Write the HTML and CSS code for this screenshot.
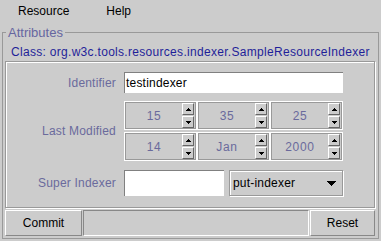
FILE: index.html
```html
<!DOCTYPE html>
<html>
<head>
<meta charset="utf-8">
<link rel="stylesheet" href="styles.css">
</head>
<body>
<div class="menubar">
  <span class="menu-item">Resource</span>
  <span class="menu-item">Help</span>
</div>
<fieldset class="attributes">
  <legend class="attributes-title">Attributes</legend>
  <div class="class-name">Class: org.w3c.tools.resources.indexer.SampleResourceIndexer</div>
  <div class="panel">
    <div class="row row-identifier">
      <span class="label">Identifier</span>
      <div class="textfield wide">testindexer</div>
    </div>
    <div class="row row-modified">
      <span class="label">Last Modified</span>
      <div class="spinners">
        <div class="spinner"><span class="spinner-value">15</span><div class="spinner-arrows"><span class="arrow-btn"><svg width="5" height="3" viewBox="0 0 5 3"><path d="M2 0h1v1h1v1h1v1H0V2h1V1h1z"/></svg></span><span class="arrow-btn"><svg width="5" height="3" viewBox="0 0 5 3"><path d="M0 0h5v1H4v1H3v1H2V2H1V1H0z"/></svg></span></div></div>
        <div class="spinner"><span class="spinner-value">35</span><div class="spinner-arrows"><span class="arrow-btn"><svg width="5" height="3" viewBox="0 0 5 3"><path d="M2 0h1v1h1v1h1v1H0V2h1V1h1z"/></svg></span><span class="arrow-btn"><svg width="5" height="3" viewBox="0 0 5 3"><path d="M0 0h5v1H4v1H3v1H2V2H1V1H0z"/></svg></span></div></div>
        <div class="spinner"><span class="spinner-value">25</span><div class="spinner-arrows"><span class="arrow-btn"><svg width="5" height="3" viewBox="0 0 5 3"><path d="M2 0h1v1h1v1h1v1H0V2h1V1h1z"/></svg></span><span class="arrow-btn"><svg width="5" height="3" viewBox="0 0 5 3"><path d="M0 0h5v1H4v1H3v1H2V2H1V1H0z"/></svg></span></div></div>
        <div class="spinner"><span class="spinner-value">14</span><div class="spinner-arrows"><span class="arrow-btn"><svg width="5" height="3" viewBox="0 0 5 3"><path d="M2 0h1v1h1v1h1v1H0V2h1V1h1z"/></svg></span><span class="arrow-btn"><svg width="5" height="3" viewBox="0 0 5 3"><path d="M0 0h5v1H4v1H3v1H2V2H1V1H0z"/></svg></span></div></div>
        <div class="spinner"><span class="spinner-value">Jan</span><div class="spinner-arrows"><span class="arrow-btn"><svg width="5" height="3" viewBox="0 0 5 3"><path d="M2 0h1v1h1v1h1v1H0V2h1V1h1z"/></svg></span><span class="arrow-btn"><svg width="5" height="3" viewBox="0 0 5 3"><path d="M0 0h5v1H4v1H3v1H2V2H1V1H0z"/></svg></span></div></div>
        <div class="spinner"><span class="spinner-value">2000</span><div class="spinner-arrows"><span class="arrow-btn"><svg width="5" height="3" viewBox="0 0 5 3"><path d="M2 0h1v1h1v1h1v1H0V2h1V1h1z"/></svg></span><span class="arrow-btn"><svg width="5" height="3" viewBox="0 0 5 3"><path d="M0 0h5v1H4v1H3v1H2V2H1V1H0z"/></svg></span></div></div>
      </div>
    </div>
    <div class="row row-super">
      <span class="label">Super Indexer</span>
      <div class="super-fields">
        <div class="textfield short"></div>
        <div class="combo"><span class="combo-value">put-indexer</span><svg class="combo-arrow" width="9" height="5" viewBox="0 0 9 5"><path d="M0 0h9v1H8v1H7v1H6v1H5v1H4V4H3V3H2V2H1V1H0z"/></svg></div>
      </div>
    </div>
  </div>
  <div class="actions">
    <div class="btn commit">Commit</div>
    <div class="status"></div>
    <div class="btn reset">Reset</div>
  </div>
</fieldset>
</body>
</html>
```
FILE: styles.css
```css
html, body {
  margin: 0;
  padding: 0;
}
body {
  width: 381px;
  height: 241px;
  background: #cccccc;
  font-family: "Liberation Sans", Arial, sans-serif;
  font-size: 12px;
  color: #000;
  overflow: hidden;
}
.menubar {
  height: 22px;
  line-height: 22px;
  display: flex;
  gap: 37px;
  padding-left: 18px;
  box-sizing: border-box;
}
.attributes {
  margin: 3px 2px 2px 2px;
  padding: 5px 3px 2px 2px;
  border: 1px solid #999999;
  min-width: 0;
}
.attributes-title {
  margin-left: 1px;
  padding: 0 2px;
  font-size: 13px;
  line-height: 15px;
  color: #6666a0;
}
.class-name {
  line-height: 14px;
  padding-left: 6px;
  margin-bottom: 2px;
  color: #1f1f99;
  white-space: nowrap;
  letter-spacing: 0.3px;
}
.panel {
  height: 147px;
  box-sizing: border-box;
  border: 1px solid #999999;
  box-shadow: inset 1px 1px 0 #ffffff, 1px 1px 0 #ffffff;
  padding: 10px 0 0 0;
}
.row {
  display: flex;
  align-items: center;
  gap: 8px;
}
.label {
  width: 110px;
  text-align: right;
  color: #6a6a9c;
  white-space: nowrap;
  letter-spacing: 0.2px;
}
.row-identifier {
  height: 21px;
}
.row-modified {
  margin-top: 8px;
  height: 60px;
}
.row-super {
  margin-top: 9px;
  height: 26px;
}
.textfield {
  background: #ffffff;
  border-top: 1px solid #808080;
  border-left: 1px solid #808080;
  box-sizing: border-box;
  height: 100%;
  padding-left: 1px;
  line-height: 20px;
  letter-spacing: 0.2px;
}
.wide {
  width: 219px;
}
.spinners {
  width: 219px;
  height: 60px;
  display: grid;
  grid-template-columns: repeat(3, 1fr);
  grid-template-rows: 29px 29px;
  row-gap: 2px;
}
.spinner {
  display: flex;
  box-sizing: border-box;
  border: 1px solid #ffffff;
  box-shadow: inset 0 0 0 1px #999999;
  padding: 1px 2px 1px 1px;
}
.spinner-value {
  flex: 1;
  display: flex;
  align-items: center;
  justify-content: center;
  color: #6a6a9c;
  letter-spacing: 0.7px;
}
.spinner-arrows {
  display: flex;
  flex-direction: column;
  gap: 1px;
}
.arrow-btn {
  width: 12px;
  height: 12px;
  box-sizing: border-box;
  border: 1px solid;
  border-color: #ffffff #666666 #666666 #ffffff;
  display: flex;
  align-items: center;
  justify-content: center;
}
.arrow-btn svg {
  display: block;
  fill: #000;
}
.super-fields {
  display: flex;
  gap: 5px;
  width: 219px;
  height: 100%;
}
.short {
  width: 100px;
}
.combo {
  width: 114px;
  box-sizing: border-box;
  border: 1px solid #999999;
  box-shadow: inset 1px 1px 0 #ffffff, 1px 1px 0 #ffffff;
  display: flex;
  align-items: center;
  justify-content: space-between;
  padding: 0 6px 0 3px;
}
.combo-value {
  letter-spacing: 0.2px;
}
.combo-arrow {
  display: block;
  fill: #000;
}
.actions {
  margin-top: 2px;
  height: 26px;
  display: flex;
  gap: 1px;
}
.btn {
  box-sizing: border-box;
  border: 1px solid;
  border-color: #ffffff #888888 #888888 #ffffff;
  display: flex;
  align-items: center;
  justify-content: center;
}
.commit {
  width: 77px;
}
.reset {
  width: 65px;
}
.status {
  flex: 1;
  box-sizing: border-box;
  border: 1px solid;
  border-color: #888888 #ffffff #ffffff #888888;
}
```
